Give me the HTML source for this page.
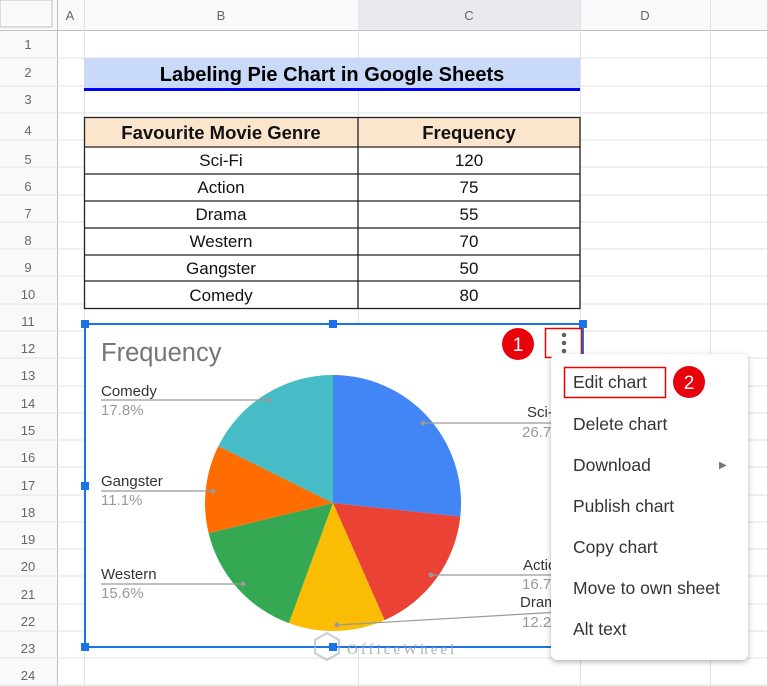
<!DOCTYPE html>
<html><head><meta charset="utf-8"><style>
body{margin:0;width:767px;height:686px;overflow:hidden;background:#fff;font-family:"Liberation Sans",Arial,sans-serif;position:relative}
.a{position:absolute}
.menu{position:absolute;left:551px;top:354px;width:197px;height:306px;background:#fff;border-radius:6px;box-shadow:0 2px 6px rgba(0,0,0,.3)}
.mi{position:absolute;left:22px;font-size:17.5px;color:#333}
</style></head><body>
<svg class="a" style="left:0;top:0" width="767" height="686">
<rect x="0" y="0" width="767" height="30" fill="#f8f9fa"/>
<rect x="0" y="0" width="57" height="686" fill="#f8f9fa"/>
<rect x="358" y="0" width="222" height="30" fill="#e8eaed"/>
<rect x="0" y="0" width="52" height="27" fill="#f8f9fa" stroke="#c0c0c0"/>
<g stroke="#e2e2e2" stroke-width="1">
<line x1="0" y1="30.5" x2="767" y2="30.5" stroke="#c0c0c0"/>
<line x1="57.5" y1="0" x2="57.5" y2="686" stroke="#c0c0c0"/>
<line x1="84.5" y1="0" x2="84.5" y2="686"/>
<line x1="358.5" y1="0" x2="358.5" y2="686"/>
<line x1="580.5" y1="0" x2="580.5" y2="686"/>
<line x1="710.5" y1="0" x2="710.5" y2="686"/>
</g>
<g stroke="#e2e2e2">
<line x1="0" y1="58" x2="767" y2="58"/><line x1="0" y1="86" x2="767" y2="86"/><line x1="0" y1="113" x2="767" y2="113"/>
<line x1="0" y1="140" x2="767" y2="140"/><line x1="0" y1="167" x2="767" y2="167"/><line x1="0" y1="195" x2="767" y2="195"/>
<line x1="0" y1="222" x2="767" y2="222"/><line x1="0" y1="249" x2="767" y2="249"/><line x1="0" y1="276" x2="767" y2="276"/>
<line x1="0" y1="304" x2="767" y2="304"/><line x1="0" y1="331" x2="767" y2="331"/><line x1="0" y1="358" x2="767" y2="358"/>
<line x1="0" y1="386" x2="767" y2="386"/><line x1="0" y1="413" x2="767" y2="413"/><line x1="0" y1="440" x2="767" y2="440"/>
<line x1="0" y1="467" x2="767" y2="467"/><line x1="0" y1="495" x2="767" y2="495"/><line x1="0" y1="522" x2="767" y2="522"/>
<line x1="0" y1="549" x2="767" y2="549"/><line x1="0" y1="576" x2="767" y2="576"/><line x1="0" y1="604" x2="767" y2="604"/>
<line x1="0" y1="631" x2="767" y2="631"/><line x1="0" y1="658" x2="767" y2="658"/><line x1="0" y1="685" x2="767" y2="685"/>
</g>
<g font-size="13" fill="#666" text-anchor="middle" font-family="Liberation Sans">
<text x="70" y="20">A</text><text x="221" y="20">B</text><text x="469" y="20">C</text><text x="645" y="20">D</text>
<text x="28" y="49">1</text><text x="28" y="77">2</text><text x="28" y="104">3</text><text x="28" y="135">4</text>
<text x="28" y="164">5</text><text x="28" y="191">6</text><text x="28" y="218">7</text><text x="28" y="245">8</text>
<text x="28" y="272">9</text><text x="28" y="299">10</text><text x="28" y="326">11</text><text x="28" y="353">12</text>
<text x="28" y="380">13</text><text x="28" y="408">14</text><text x="28" y="435">15</text><text x="28" y="462">16</text>
<text x="28" y="490">17</text><text x="28" y="517">18</text><text x="28" y="544">19</text><text x="28" y="571">20</text>
<text x="28" y="599">21</text><text x="28" y="626">22</text><text x="28" y="653">23</text><text x="28" y="680">24</text>
</g>
<rect x="84" y="58" width="496" height="31" fill="#c9daf8"/>
<rect x="84" y="88" width="496" height="3" fill="#0000ff"/>
<text x="332" y="81" text-anchor="middle" font-size="20" font-weight="bold" fill="#000">Labeling Pie Chart in Google Sheets</text>
<rect x="84" y="117" width="496" height="30" fill="#fce5cd"/>
<rect x="84" y="147" width="496" height="161" fill="#fff"/>
<g stroke="#222" stroke-width="1.3" fill="none">
<rect x="84.5" y="117.5" width="495.5" height="191"/>
<line x1="358" y1="117" x2="358" y2="308"/>
<line x1="84" y1="147" x2="580" y2="147"/><line x1="84" y1="174" x2="580" y2="174"/>
<line x1="84" y1="201" x2="580" y2="201"/><line x1="84" y1="228" x2="580" y2="228"/>
<line x1="84" y1="255" x2="580" y2="255"/><line x1="84" y1="281" x2="580" y2="281"/>
</g>
<g text-anchor="middle" font-size="17" fill="#111">
<text x="221" y="139" font-weight="bold" font-size="18.5">Favourite Movie Genre</text><text x="469" y="139" font-weight="bold" font-size="18.5">Frequency</text>
<text x="221" y="166">Sci-Fi</text><text x="469" y="166">120</text>
<text x="221" y="193">Action</text><text x="469" y="193">75</text>
<text x="221" y="220">Drama</text><text x="469" y="220">55</text>
<text x="221" y="247">Western</text><text x="469" y="247">70</text>
<text x="221" y="274">Gangster</text><text x="469" y="274">50</text>
<text x="221" y="301">Comedy</text><text x="469" y="301">80</text>
</g>
<rect x="85" y="324" width="498" height="323" fill="#fff"/>
<g stroke="#1a73e8" stroke-width="2" fill="none"><rect x="85" y="324" width="498" height="323"/></g>
<g fill="#1a73e8">
<rect x="81" y="320" width="8" height="8"/><rect x="329" y="320" width="8" height="8"/><rect x="579" y="320" width="8" height="8"/>
<rect x="81" y="482" width="8" height="8"/><rect x="81" y="643" width="8" height="8"/><rect x="329" y="643" width="8" height="8"/>
</g>
<text x="101" y="361" font-size="25.5" fill="#757575">Frequency</text>
<path d="M333 503 L333 375 A128 128 0 0 1 460.3 516.6Z" fill="#4285f4"/>
<path d="M333 503 L460.3 516.6 A128 128 0 0 1 384.6 620.1Z" fill="#ea4335"/>
<path d="M333 503 L384.6 620.1 A128 128 0 0 1 288.8 623.1Z" fill="#fbbc04"/>
<path d="M333 503 L288.8 623.1 A128 128 0 0 1 208.6 533.1Z" fill="#34a853"/>
<path d="M333 503 L208.6 533.1 A128 128 0 0 1 218.4 446.1Z" fill="#ff6d01"/>
<path d="M333 503 L218.4 446.1 A128 128 0 0 1 333 375Z" fill="#46bdc6"/>
<g stroke="#999" stroke-width="1.2" fill="none">
<line x1="101" y1="400" x2="269" y2="400"/><line x1="101" y1="491" x2="213" y2="491"/><line x1="101" y1="584" x2="243" y2="584"/>
<line x1="423" y1="423" x2="560" y2="423"/><line x1="431" y1="575" x2="560" y2="575"/><line x1="337" y1="625" x2="560" y2="612"/>
</g>
<g fill="#999"><circle cx="269" cy="400" r="2.5"/><circle cx="213" cy="491" r="2.5"/><circle cx="243" cy="584" r="2.5"/><circle cx="423" cy="423" r="2.5"/><circle cx="431" cy="575" r="2.5"/><circle cx="337" cy="625" r="2.5"/></g>
<g font-size="15" fill="#333"><text x="101" y="396">Comedy</text><text x="101" y="486">Gangster</text><text x="101" y="579">Western</text>
<text x="527" y="417">Sci-</text><text x="523" y="570">Actio</text><text x="520" y="607">Dram</text></g>
<g font-size="15" fill="#999"><text x="101" y="415">17.8%</text><text x="101" y="505">11.1%</text><text x="101" y="598">15.6%</text>
<text x="522" y="437">26.7</text><text x="522" y="589">16.7</text><text x="522" y="627">12.2</text></g>
<text x="347" y="654" font-size="15" fill="#99a" letter-spacing="3" font-family="Liberation Serif" opacity=".8">OfficeWheel</text>
<path d="M327 633 l12 7 v13 l-12 7 l-12 -7 v-13z" fill="none" stroke="#aab" stroke-width="2" opacity=".6"/>
<rect x="545.5" y="328.5" width="36" height="29" fill="none" stroke="#e00" stroke-width="1.5"/>
<g fill="#5f6368"><circle cx="564" cy="335" r="2.3"/><circle cx="564" cy="343" r="2.3"/><circle cx="564" cy="351" r="2.3"/></g>
<circle cx="518" cy="344" r="16" fill="#e8000b"/>
<text x="518" y="351" text-anchor="middle" font-size="19" fill="#fff">1</text>
</svg>
<div class="menu">
<div class="mi" style="top:18px">Edit chart</div>
<div class="mi" style="top:60px">Delete chart</div>
<div class="mi" style="top:101px">Download</div>
<div class="a" style="left:168px;top:106px;font-size:10px;color:#777">▶</div>
<div class="mi" style="top:142px">Publish chart</div>
<div class="mi" style="top:183px">Copy chart</div>
<div class="mi" style="top:224px">Move to own sheet</div>
<div class="mi" style="top:265px">Alt text</div>
</div>
<svg class="a" style="left:0;top:0" width="767" height="686">
<rect x="564.5" y="367.5" width="101" height="30" fill="none" stroke="#e00" stroke-width="1.5"/>
<circle cx="689" cy="382" r="16" fill="#e8000b"/>
<text x="689" y="389" text-anchor="middle" font-size="19" fill="#fff">2</text>
</svg>
</body></html>
